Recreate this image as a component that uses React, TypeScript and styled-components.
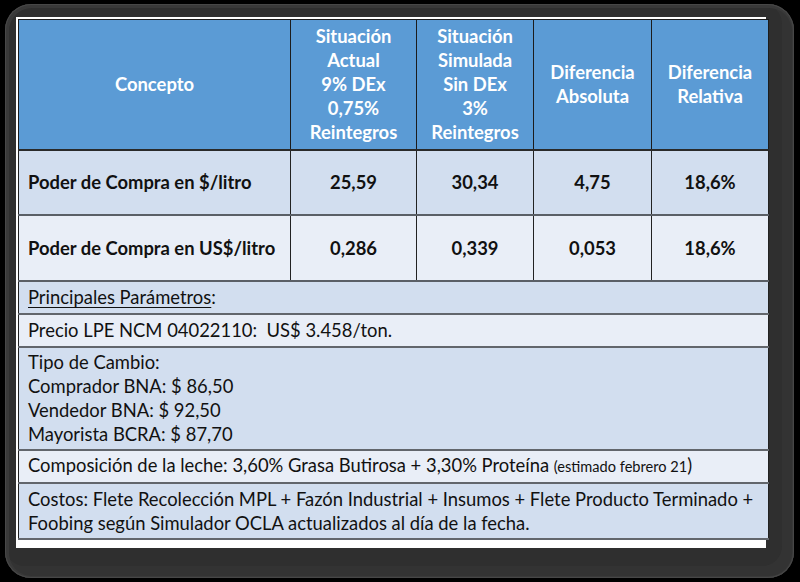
import React from "react";
import styled, { createGlobalStyle } from "styled-components";

const Global = createGlobalStyle`
  html, body { margin: 0; padding: 0; background: #000; }
  #root { width: 800px; height: 582px; overflow: hidden; }
`;

const Frame = styled.div`
  box-sizing: border-box;
  margin: 4px 0 0 5px;
  width: 789px;
  height: 574px;
  border-radius: 26px;
  background: #2f2f2f;
  box-shadow: inset 0 0 0 1px #474747, inset 1px 1px 0 3px #393939,
    inset -6px -6px 0 6px #333;
  padding: 13px 28px 30px 11px;
`;

const Sheet = styled.div`
  box-sizing: border-box;
  background: #fff;
  width: 750px;
  height: 531px;
  padding: 2px 3px 9px 2px;
`;

const Table = styled.table`
  border-collapse: collapse;
  width: 745px;
  table-layout: fixed;
  font-family: Lato, "Liberation Sans", sans-serif;
  font-size: 18.4px;
  color: #111;
`;

const HeadCell = styled.th<{ $w: number }>`
  width: ${(p) => p.$w}px;
  background: #5b9bd5;
  color: #fff;
  font-weight: 700;
  font-size: 18.4px;
  line-height: 24px;
  text-align: center;
  vertical-align: middle;
  border: 1px solid #1c1c1c;
  border-bottom: 2px solid #2a2a2a;
  padding: 0;
`;

const Row = styled.tr<{ $h: number; $tone: "mid" | "light" }>`
  height: ${(p) => p.$h}px;
  background: ${(p) => (p.$tone === "mid" ? "#d2deef" : "#e9eef7")};
`;

const ValueCell = styled.td<{ $first?: boolean }>`
  border: 1px solid #222;
  border-bottom: 2px solid #5a5f66;
  font-weight: 700;
  text-align: ${(p) => (p.$first ? "left" : "center")};
  padding: ${(p) => (p.$first ? "0 0 0 9px" : "0")};
  vertical-align: middle;
  white-space: nowrap;
`;

const NoteCell = styled.td`
  border: 1px solid #222;
  border-bottom: 2px solid #62666c;
  padding: 0 0 0 9px;
  line-height: 24px;
  vertical-align: middle;
  white-space: nowrap;
`;

const Under = styled.span`
  text-decoration: underline;
  text-underline-offset: 3px;
  text-decoration-thickness: 1px;
`;

const Small = styled.span`
  font-size: 14.6px;
`;

const cols = [271, 125, 116, 117, 116];

export default function App() {
  return (
    <>
      <Global />
      <Frame>
        <Sheet>
          <Table>
            <thead>
              <tr style={{ height: 130 }}>
                <HeadCell $w={cols[0]}>Concepto</HeadCell>
                <HeadCell $w={cols[1]}>
                  Situación
                  <br />
                  Actual
                  <br />
                  9% DEx
                  <br />
                  0,75%
                  <br />
                  Reintegros
                </HeadCell>
                <HeadCell $w={cols[2]}>
                  Situación
                  <br />
                  Simulada
                  <br />
                  Sin DEx
                  <br />
                  3%
                  <br />
                  Reintegros
                </HeadCell>
                <HeadCell $w={cols[3]}>
                  Diferencia
                  <br />
                  Absoluta
                </HeadCell>
                <HeadCell $w={cols[4]}>
                  Diferencia
                  <br />
                  Relativa
                </HeadCell>
              </tr>
            </thead>
            <tbody>
              <Row $h={65} $tone="mid">
                <ValueCell $first>Poder de Compra en $/litro</ValueCell>
                <ValueCell>25,59</ValueCell>
                <ValueCell>30,34</ValueCell>
                <ValueCell>4,75</ValueCell>
                <ValueCell>18,6%</ValueCell>
              </Row>
              <Row $h={66} $tone="light">
                <ValueCell $first>Poder de Compra en US$/litro</ValueCell>
                <ValueCell>0,286</ValueCell>
                <ValueCell>0,339</ValueCell>
                <ValueCell>0,053</ValueCell>
                <ValueCell>18,6%</ValueCell>
              </Row>
              <Row $h={33} $tone="mid">
                <NoteCell colSpan={5}>
                  <Under>Principales Parámetros</Under>:
                </NoteCell>
              </Row>
              <Row $h={33} $tone="light">
                <NoteCell colSpan={5}>Precio LPE NCM 04022110:&nbsp; US$ 3.458/ton.</NoteCell>
              </Row>
              <Row $h={103} $tone="mid">
                <NoteCell colSpan={5}>
                  Tipo de Cambio:
                  <br />
                  Comprador BNA: $ 86,50
                  <br />
                  Vendedor BNA: $ 92,50
                  <br />
                  Mayorista BCRA: $ 87,70
                </NoteCell>
              </Row>
              <Row $h={33} $tone="light">
                <NoteCell colSpan={5}>
                  Composición de la leche: 3,60% Grasa Butirosa + 3,30% Proteína{" "}
                  <Small>(estimado febrero 21</Small>)
                </NoteCell>
              </Row>
              <Row $h={56} $tone="mid">
                <NoteCell colSpan={5}>
                  Costos: Flete Recolección MPL + Fazón Industrial + Insumos + Flete Producto Terminado +
                  <br />
                  Foobing según Simulador OCLA actualizados al día de la fecha.
                </NoteCell>
              </Row>
            </tbody>
          </Table>
        </Sheet>
      </Frame>
    </>
  );
}
